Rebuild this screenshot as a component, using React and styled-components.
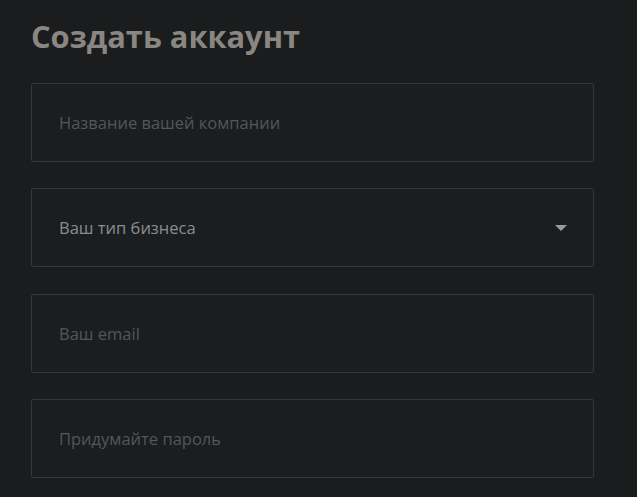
import { createGlobalStyle, styled } from "styled-components";

const GlobalStyle = createGlobalStyle`
    html, body {
        margin: 0;
        padding: 0;
        background: #1b1c1e;
        font-family: "Open Sans", "Noto Sans", sans-serif;
    }
`

export default function App() {
    return (
        <>
            <GlobalStyle />
            <Form>
                <Title>Создать аккаунт</Title>
                <Field placeholder="Название вашей компании" />
                <SelectBox>
                    <span>Ваш тип бизнеса</span>
                    <Caret />
                </SelectBox>
                <Field placeholder="Ваш email" />
                <Field type="password" placeholder="Придумайте пароль" />
            </Form>
        </>
    );
}

const Form = styled.div`
    width: 563px;
    padding: 15px 0 0 31px;
    display: flex;
    flex-direction: column;
    gap: 26.3px;
`

const Title = styled.h1`
    margin: 0 0 -0.3px 0;
    font-size: 30.8px;
    line-height: 42px;
    font-weight: 700;
    color: #8a8681;
`

const Field = styled.input`
    box-sizing: border-box;
    width: 100%;
    height: 79px;
    margin: 0;
    padding: 0 27px;
    background: #1a1e21;
    border: 1px solid #34373a;
    border-radius: 2px;
    font-family: inherit;
    font-size: 16.5px;
    color: #8e8e8e;
    outline: none;

    &::placeholder {
        color: #545657;
    }
`

const SelectBox = styled.div`
    box-sizing: border-box;
    width: 100%;
    height: 79px;
    padding: 0 26px 0 27px;
    background: #1a1e21;
    border: 1px solid #34373a;
    border-radius: 2px;
    display: flex;
    align-items: center;
    justify-content: space-between;
    font-size: 16.5px;
    color: #8e8c89;
`

const Caret = styled.span`
    width: 0;
    height: 0;
    border-left: 6px solid transparent;
    border-right: 6px solid transparent;
    border-top: 6px solid #9a9a9a;
`
